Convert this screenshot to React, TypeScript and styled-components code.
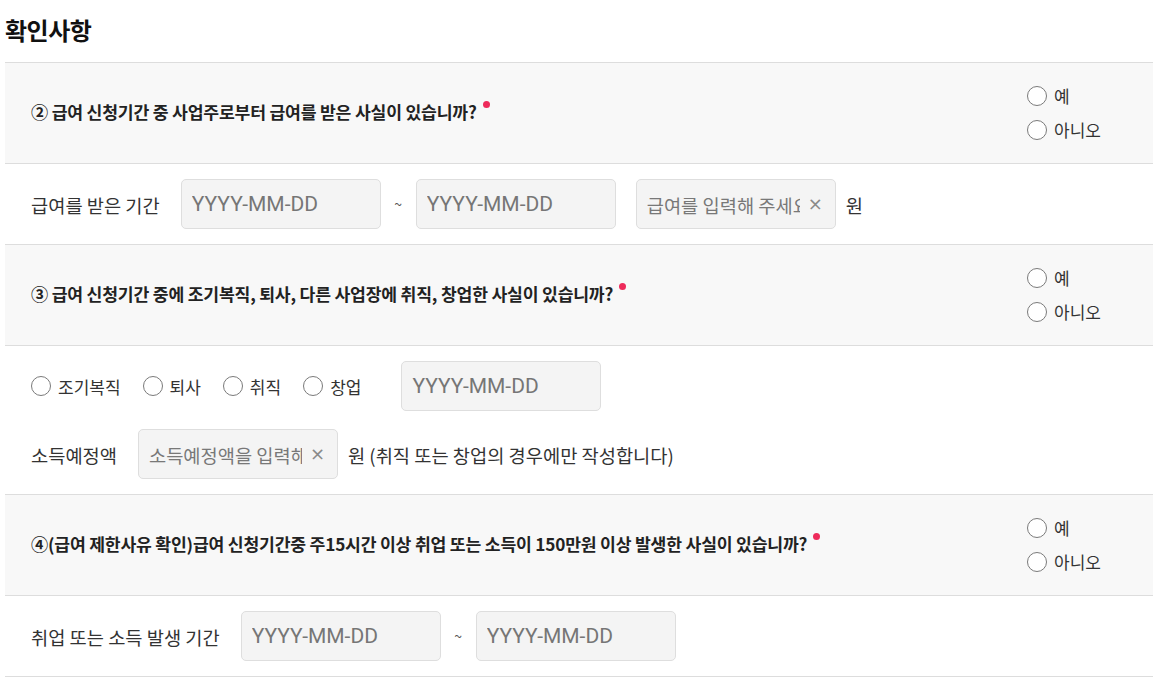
import React from "react";
import styled, { createGlobalStyle } from "styled-components";

const GlobalStyle = createGlobalStyle`
  html, body { margin: 0; padding: 0; background: #fff; }
  body {
    font-family: "Noto Sans CJK KR", "Noto Sans", sans-serif;
    color: #333;
    -webkit-font-smoothing: antialiased;
  }
  * { box-sizing: border-box; }
`;

const Page = styled.div`
  padding: 0 0 0 5px;
  width: 1153px;
`;

const Title = styled.h2`
  margin: 0;
  height: 62px;
  line-height: 60px;
  font-size: 24px;
  font-weight: 700;
  color: #111;
  letter-spacing: -0.5px;
`;

const Table = styled.div`
  border-top: 1px solid #dddddd;
  display: flex;
  flex-direction: column;
`;

const QuestionRow = styled.div`
  display: flex;
  align-items: center;
  height: 101px;
  background: #f8f8f8;
  border-bottom: 1px solid #dddddd;
  padding-left: 26px;
`;

const QuestionText = styled.div`
  flex: 1;
  font-size: 17.2px;
  font-weight: 700;
  color: #222;
  line-height: 24px;
  letter-spacing: -0.2px;
  margin-top: -3px;
`;

const RequiredDot = styled.span`
  display: inline-block;
  width: 7px;
  height: 7px;
  border-radius: 50%;
  background: #ee2b5b;
  vertical-align: top;
  margin: 1px 0 0 6px;
`;

const YesNo = styled.div`
  flex: none;
  width: 126px;
  display: flex;
  flex-direction: column;
  margin-top: -1px;
`;

const RadioItem = styled.label`
  display: inline-flex;
  align-items: center;
  gap: 7px;
  height: 34px;
  font-size: 17px;
  color: #333;
`;

const Circle = styled.span`
  width: 20px;
  height: 20px;
  border-radius: 50%;
  border: 1px solid #7a7a7a;
  background: #fff;
  flex: none;
`;

const AnswerBlock = styled.div`
  display: flex;
  flex-direction: column;
  gap: 18px;
  padding: 15px 0 15px 26px;
  border-bottom: 1px solid #dddddd;
`;

const Line = styled.div`
  display: flex;
  align-items: center;
  height: 50px;
  font-size: 18.7px;
  color: #333;
`;

const Label = styled.span`
  margin-right: 21px;
  white-space: nowrap;
`;

const Field = styled.div<{ $gapAfter?: number }>`
  width: 200px;
  height: 50px;
  flex: none;
  display: flex;
  align-items: center;
  background: #f4f4f4;
  border: 1px solid #dedede;
  border-radius: 5px;
  padding: 0 12px 0 10px;
  margin-right: ${(p) => p.$gapAfter ?? 0}px;
`;

const DateInput = styled.input`
  width: 100%;
  border: 0;
  outline: 0;
  background: transparent;
  padding: 0;
  font-family: Roboto, "Liberation Sans", sans-serif;
  font-size: 21px;
  color: #333;
  &::placeholder { color: #767676; }
`;

const TextInput = styled.input`
  flex: 1;
  min-width: 0;
  border: 0;
  outline: 0;
  background: transparent;
  padding: 0;
  font-family: "Noto Sans CJK KR", sans-serif;
  font-size: 18.7px;
  color: #333;
  &::placeholder { color: #787878; }
`;

const Clear = styled.span`
  flex: none;
  margin-left: 8px;
  font-size: 18px;
  line-height: 1;
  color: #8a8a8a;
  font-family: "DejaVu Sans", sans-serif;
`;

const Tilde = styled.span`
  width: 35px;
  text-align: center;
  font-size: 14px;
  color: #555;
`;

const Suffix = styled.span`
  margin-left: 10px;
  white-space: nowrap;
`;

const RadioRow = styled.div`
  display: flex;
  align-items: center;
  gap: 22px;
  margin-right: 40px;
`;

const Radio = ({ label }: { label: string }) => (
  <RadioItem>
    <Circle />
    {label}
  </RadioItem>
);

const Question = ({ text }: { text: string }) => (
  <QuestionRow>
    <QuestionText>
      {text}
      <RequiredDot />
    </QuestionText>
    <YesNo>
      <Radio label="예" />
      <Radio label="아니오" />
    </YesNo>
  </QuestionRow>
);

const DateField = ({ gapAfter }: { gapAfter?: number }) => (
  <Field $gapAfter={gapAfter}>
    <DateInput placeholder="YYYY-MM-DD" readOnly />
  </Field>
);

const AmountField = ({ placeholder }: { placeholder: string }) => (
  <Field>
    <TextInput placeholder={placeholder} readOnly />
    <Clear>×</Clear>
  </Field>
);

export default function App() {
  return (
    <Page>
      <GlobalStyle />
      <Title>확인사항</Title>
      <Table>
        <Question text="② 급여 신청기간 중 사업주로부터 급여를 받은 사실이 있습니까?" />
        <AnswerBlock>
          <Line>
            <Label>급여를 받은 기간</Label>
            <DateField />
            <Tilde>~</Tilde>
            <DateField gapAfter={20} />
            <AmountField placeholder="급여를 입력해 주세요" />
            <Suffix>원</Suffix>
          </Line>
        </AnswerBlock>

        <Question text="③ 급여 신청기간 중에 조기복직, 퇴사, 다른 사업장에 취직, 창업한 사실이 있습니까?" />
        <AnswerBlock>
          <Line>
            <RadioRow>
              <Radio label="조기복직" />
              <Radio label="퇴사" />
              <Radio label="취직" />
              <Radio label="창업" />
            </RadioRow>
            <DateField />
          </Line>
          <Line>
            <Label>소득예정액</Label>
            <AmountField placeholder="소득예정액을 입력해 주세요" />
            <Suffix>원 (취직 또는 창업의 경우에만 작성합니다)</Suffix>
          </Line>
        </AnswerBlock>

        <Question text="④(급여 제한사유 확인)급여 신청기간중 주15시간 이상 취업 또는 소득이 150만원 이상 발생한 사실이 있습니까?" />
        <AnswerBlock>
          <Line>
            <Label>취업 또는 소득 발생 기간</Label>
            <DateField />
            <Tilde>~</Tilde>
            <DateField />
          </Line>
        </AnswerBlock>
      </Table>
    </Page>
  );
}
